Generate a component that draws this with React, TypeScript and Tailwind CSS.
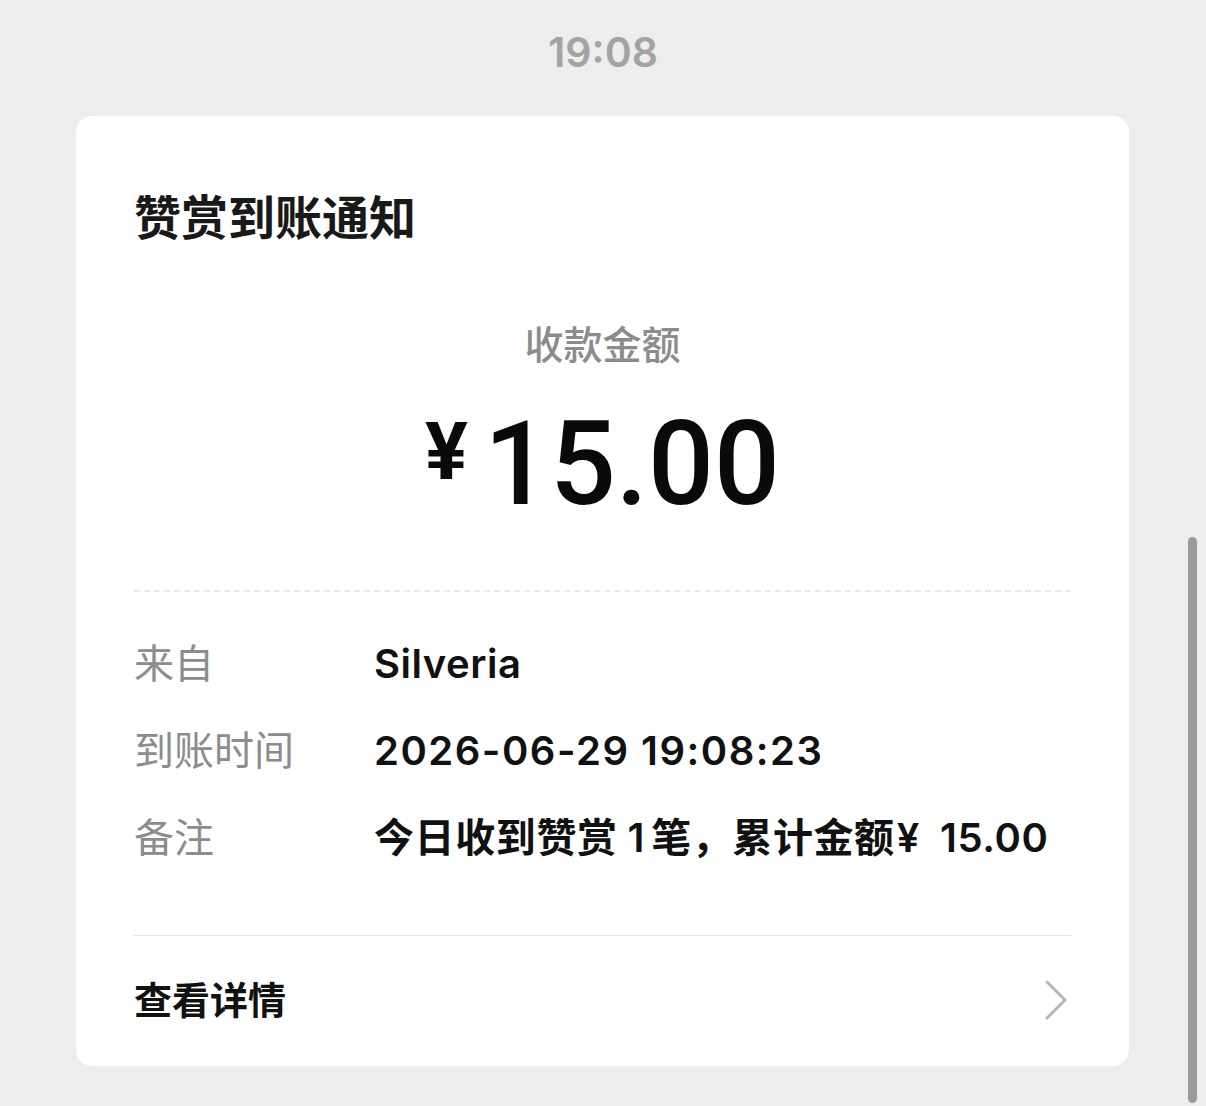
import React from "react";

const Row = ({ label, children, cls }: { label: string; children: React.ReactNode; cls: string }) => (
  <div className="flex h-[87px] items-center">
    <div className="w-[240px] shrink-0 text-[40px] font-normal text-[#8c8c8c]">{label}</div>
    <div className={"whitespace-nowrap text-[40px] font-semibold text-[#111111] " + cls}>{children}</div>
  </div>
);

export default function App() {
  return (
    <div className="relative h-[1106px] w-full overflow-hidden bg-[#ededed] font-['Inter','Noto_Sans_CJK_SC',sans-serif]">
      <div className="pt-[30px] text-center text-[41px] font-semibold leading-[44px] text-[#a3a3a3]">19:08</div>
      <div className="ml-[76px] mt-[42px] flex h-[950px] w-[1053px] flex-col rounded-[16px] bg-white px-[58px]">
        <div className="pt-[74px] text-[47px] font-bold leading-[56px] text-[#191919]">赞赏到账通知</div>
        <div className="mt-[75px] text-center text-[39px] font-medium leading-[48px] text-[#8c8c8c]">收款金额</div>
        <div className="mt-[33px] flex h-[120px] items-start justify-center font-['Roboto',sans-serif] text-[#0a0a0a]">
          <span className="mr-[16px] mt-[10px] text-[80px] font-bold leading-[80px]">¥</span>
          <span className="mt-[4px] text-[116px] font-medium leading-[116px]">15.00</span>
        </div>
        <div className="mt-[68px] border-t-2 border-dashed border-[#e8e8e8]" />
        <div className="mt-[28px] flex flex-col">
          <Row label="来自" cls="tracking-[0.5px]">Silveria</Row>
          <Row label="到账时间" cls="tracking-[1.5px]">2026-06-29 19:08:23</Row>
          <Row label="备注" cls="tracking-[0.6px]">
            今日收到赞赏<span className="ml-[10px] mr-[6px]">1</span>笔，累计金额<span className="ml-[2px]">¥</span><span className="ml-[20px]">15.00</span>
          </Row>
        </div>
        <div className="mt-[54px] border-t border-[#e5e5e5]" />
        <div className="mt-[24px] flex h-[80px] items-center justify-between">
          <div className="text-[38px] font-bold text-[#111111]">查看详情</div>
          <svg width="24" height="40" viewBox="0 0 24 40" className="mr-[3px]">
            <path d="M3 2 L21 20 L3 38" fill="none" stroke="#b5b5b5" strokeWidth="3" strokeLinecap="round" strokeLinejoin="round" />
          </svg>
        </div>
      </div>
      <div className="absolute left-[1188px] top-[537px] h-[566px] w-[9px] rounded-full bg-[#9b9b9b]" />
    </div>
  );
}
